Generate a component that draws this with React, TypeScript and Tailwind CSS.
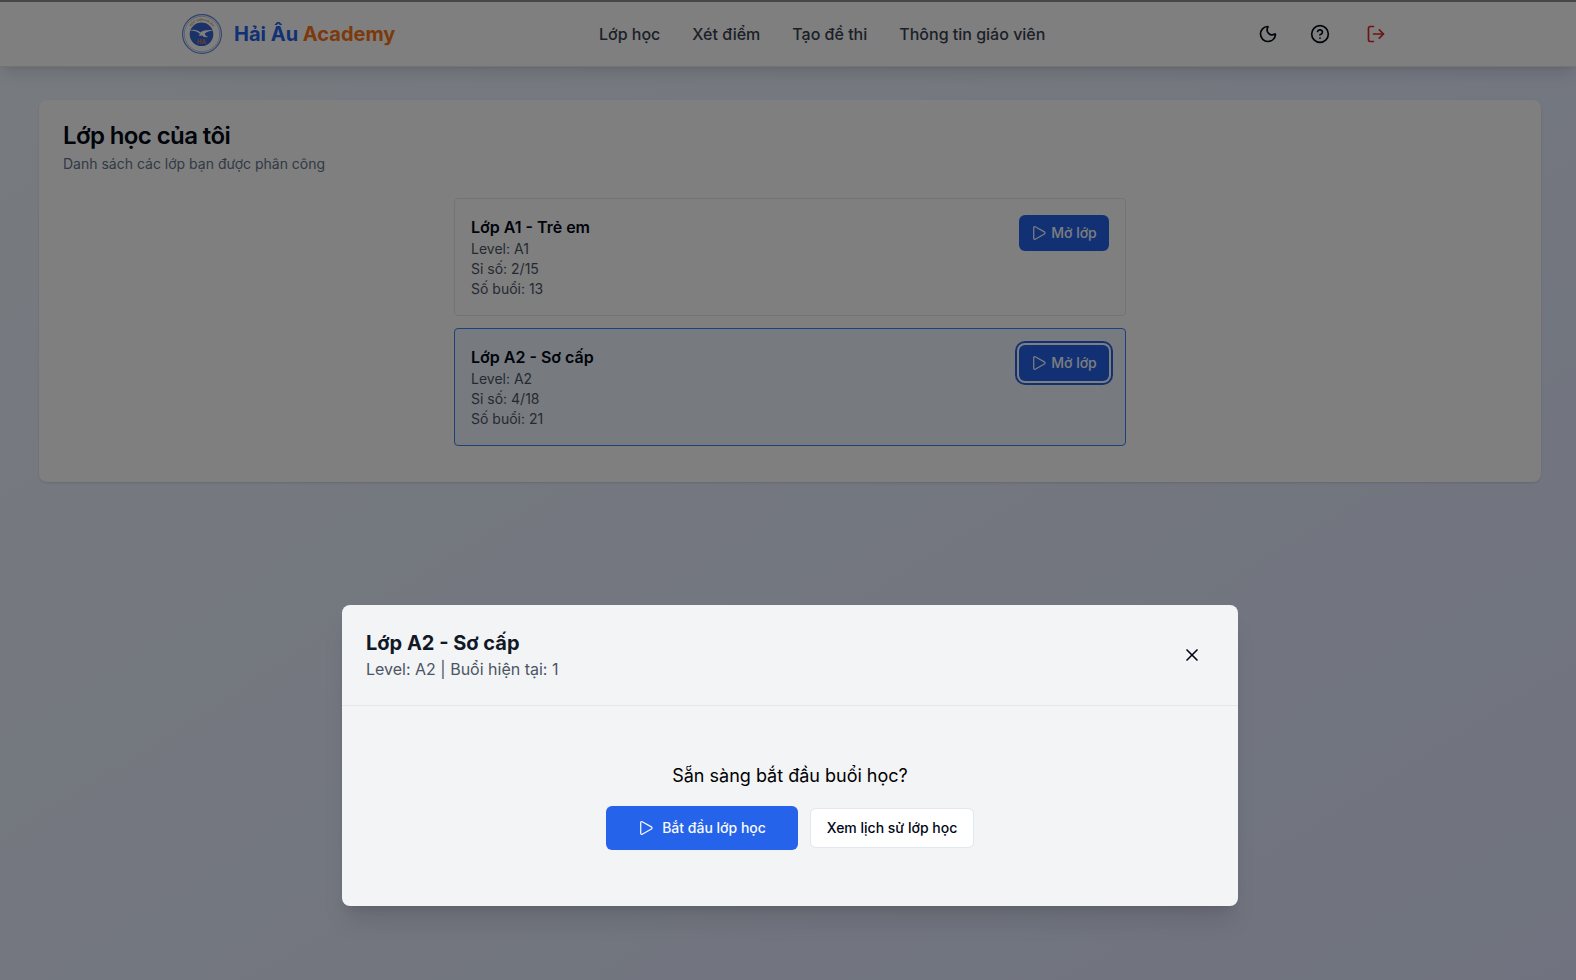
import React from "react";
import { Moon, CircleHelp, LogOut, X } from "lucide-react";

const FONT = "font-['Inter','Noto_Sans',sans-serif]";

function PlayIcon() {
  return (
    <svg width="16" height="16" viewBox="0 0 16 16" fill="none" stroke="currentColor" strokeWidth="1.25" strokeLinejoin="round">
      <path d="M2.700 2.600c0-.8.8-1.300 1.500-.9l9.200 5.200c.8.500.8 1.600 0 2.100l-9.200 5.200c-.7.400-1.500-.1-1.500-.9z" />
    </svg>
  );
}

function Logo() {
  return (
    <svg width="40" height="40" viewBox="0 0 40 40" className="shrink-0">
      <defs>
        <path id="logo-arc" d="M6.500 20a13.200 13.200 0 0 1 26.400 0" />
      </defs>
      <circle cx="20" cy="20" r="19.400" fill="#fff" stroke="#5d83d6" strokeWidth="1.100" />
      <circle cx="20" cy="20" r="17.700" fill="#fff" stroke="#a9bfe8" strokeWidth="0.900" />
      <circle cx="19.500" cy="20.300" r="11.800" fill="#3565cf" />
      <text fontSize="3" fontWeight="700" fill="#c98d52">
        <textPath href="#logo-arc" startOffset="50%" textAnchor="middle">
          HỌC VIỆN HẢI ÂU
        </textPath>
      </text>
      <path
        d="M7 16.400c4.300-1.400 8.800-.6 11.400 2 3.200-2.200 8.400-2.900 15-1.800-5 .2-8.500 1-10.600 2.900.3 1.800 1.400 2.800 3.200 3.400-2.200.6-4.500.2-5.800-1.300-1.700.3-3 .1-3.800-.7l1.900-.5c-2-2.900-5.700-4.100-11.300-4z"
        fill="#fff"
      />
      <text x="19.500" y="30" textAnchor="middle" fontSize="6" fontWeight="700" fill="#d07f5c">
        HA
      </text>
    </svg>
  );
}

const nav = ["Lớp học", "Xét điểm", "Tạo đề thi", "Thông tin giáo viên"];

const classes = [
  { name: "Lớp A1 - Trẻ em", level: "A1", size: "2/15", sessions: 13, active: false },
  { name: "Lớp A2 - Sơ cấp", level: "A2", size: "4/18", sessions: 21, active: true },
];

export default function App() {
  return (
    <div className={`relative h-[980px] w-full overflow-hidden bg-linear-to-br/srgb from-[#eff6ff] to-[#e0e7ff] ${FONT}`}>
      <div className="h-[2px] bg-[#8e8e8e]" />
      <header className="h-[65px] border-b border-[#e5e7eb] bg-white shadow-lg">
        <div className="mx-auto flex h-16 w-[1212px] items-center justify-between">
          <div className="flex w-[417px] items-center gap-3">
            <Logo />
            <div className="text-xl font-bold text-[#2563eb]">
              Hải Âu <span className="text-[#f97316]">Academy</span>
            </div>
          </div>
          <nav className="flex flex-1 gap-8 text-base font-medium whitespace-nowrap text-[#374151]">
            {nav.map((item) => (
              <a key={item}>{item}</a>
            ))}
          </nav>
          <div className="flex items-center gap-8 pr-2 text-[#020817]">
            <Moon size={20} />
            <CircleHelp size={20} />
            <LogOut size={20} className="ml-1 text-[#dc2626]" />
          </div>
        </div>
      </header>

      <main className="pt-[33px] pr-[35px] pl-[39px]">
        <section className="h-[382px] rounded-lg bg-white px-6 pt-[19px] shadow-sm">
          <h1 className="text-2xl leading-[34px] font-semibold tracking-tight text-[#020817]">Lớp học của tôi</h1>
          <p className="mt-px text-sm leading-5 text-[#64748b]">Danh sách các lớp bạn được phân công</p>
          <div className="mx-auto mt-6 flex w-[672px] flex-col gap-3">
            {classes.map((c) => (
              <div
                key={c.name}
                className={`flex h-[118px] items-start justify-between rounded border p-4 ${
                  c.active ? "border-[#3b82f6] bg-[#eff6ff]" : "border-[#e5e7eb]"
                }`}
              >
                <div className="text-sm leading-5 text-[#4b5563]">
                  <div className="text-base leading-6 font-semibold text-[#020817]">{c.name}</div>
                  <div>Level: {c.level}</div>
                  <div>Sỉ số: {c.size}</div>
                  <div>Số buổi: {c.sessions}</div>
                </div>
                <button
                  className={`flex h-9 w-[90px] items-center justify-center gap-1 rounded-md bg-[#2563eb] text-sm font-medium whitespace-nowrap text-[#f8fafc] ${
                    c.active ? "ring-2 ring-[#2563eb] ring-offset-2 ring-offset-white" : ""
                  }`}
                >
                  <PlayIcon />
                  Mở lớp
                </button>
              </div>
            ))}
          </div>
        </section>
      </main>

      <div className="absolute inset-0 flex justify-center bg-black/50 pl-1">
        <div className="mt-[605px] h-[301px] w-[896px] rounded-lg bg-[#f3f4f6] shadow-xl">
          <div className="flex h-[101px] items-center justify-between border-b border-[#e5e7eb] px-6">
            <div>
              <h2 className="text-xl leading-7 font-bold text-[#111827]">Lớp A2 - Sơ cấp</h2>
              <p className="text-base leading-6 text-[#4b5563]">Level: A2 | Buổi hiện tại: 1</p>
            </div>
            <button className="flex h-10 w-11 items-center justify-center text-[#020817]">
              <X size={20} strokeWidth={2} />
            </button>
          </div>
          <div className="flex flex-col items-center pt-14">
            <p className="text-lg leading-7 text-black">Sẵn sàng bắt đầu buổi học?</p>
            <div className="mt-4 flex items-center gap-3 text-sm font-medium whitespace-nowrap">
              <button className="flex h-11 w-48 items-center justify-center gap-2 rounded-md bg-[#2563eb] text-[#f8fafc]">
                <PlayIcon />
                Bắt đầu lớp học
              </button>
              <button className="h-10 w-[164px] rounded-md border border-[#e2e8f0] bg-white text-[#020817]">
                Xem lịch sử lớp học
              </button>
            </div>
          </div>
        </div>
      </div>
    </div>
  );
}
